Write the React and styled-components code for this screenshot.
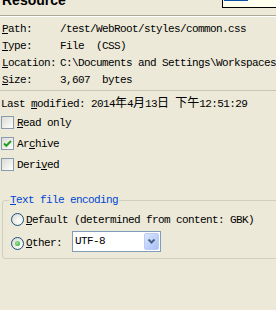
import React from 'react';
import styled, { createGlobalStyle } from 'styled-components';

const GlobalStyle = createGlobalStyle`
  html, body {
    margin: 0;
    padding: 0;
    background: #ece9d8;
  }
  body {
    width: 276px;
    height: 310px;
    overflow: hidden;
    font-family: "Liberation Mono", "Noto Sans CJK SC", monospace;
    font-size: 11px;
    letter-spacing: -0.6px;
    color: #000;
  }
`

const Page = styled.div`
  position: relative;
  width: 276px;
  height: 310px;
  overflow: hidden;
`

const Header = styled.div`
  height: 15px;
  border-bottom: 1px solid #aca899;
  box-shadow: 0 1px 0 #fff;
  overflow: hidden;
`

const Title = styled.div`
  margin: -8px 0 0 2px;
  font-family: "Liberation Sans", Arial, sans-serif;
  font-weight: bold;
  font-size: 14px;
  line-height: 16px;
  letter-spacing: 0;
`

const Hint = styled.div`
  position: absolute;
  top: -1px;
  left: 222px;
  width: 60px;
  height: 7px;
  border: 1px solid #000;
  background: #ffffee;
  overflow: hidden;
  a {
    display: block;
    margin: -10px 0 0 1px;
    width: 23px;
    color: #0a4fa8;
    text-decoration: underline;
    font-size: 11px;
    line-height: 12px;
  }
`

const Info = styled.div`
  display: grid;
  grid-template-columns: 58px 1fr;
  grid-auto-rows: 17px;
  align-items: center;
  padding: 4px 0 2px 2px;
  white-space: pre;
  border-bottom: 1px solid #c8c5b4;
`

const Key = styled.u`
  text-decoration: underline;
`

const Modified = styled.div`
  margin-top: 5px;
  padding-left: 1px;
  line-height: 16px;
  height: 16px;
  white-space: pre;
`

const Cjk = styled.span`
  font-size: 12px;
  letter-spacing: 0;
`

const CheckRow = styled.label`
  display: flex;
  align-items: center;
  height: 21px;
  gap: 3px;
  padding-left: 1px;
`

const Box = styled.span`
  width: 11px;
  height: 11px;
  border: 1px solid #8a9bb0;
  background: linear-gradient(135deg, #dcdcd6 0%, #f4f4f0 70%, #fff 100%);
  display: flex;
  align-items: center;
  justify-content: center;
`

const Group = styled.fieldset`
  margin: 17px 0 0 2px;
  width: 290px;
  padding: 0 0 6px 6px;
  border: 1px solid #d0d0bf;
  border-radius: 3px;
  legend {
    padding: 0 1px;
    line-height: 16px;
    color: #0046d5;
  }
`

const RadioRow = styled.div`
  display: flex;
  align-items: center;
  height: ${p => p.$h}px;
  margin-top: ${p => p.$top || 0}px;
  padding-left: 2px;
  white-space: pre;
`

const Radio = styled.span`
  width: 11px;
  height: 11px;
  border-radius: 50%;
  border: 1px solid #1c5180;
  background: radial-gradient(circle at 65% 65%, #fff 0%, #f0f0ea 40%, #d4d4cc 100%);
  margin: ${p => p.$shift || 0}px 2px 0 0;
  display: flex;
  align-items: center;
  justify-content: center;
  &::after {
    content: '';
    display: ${p => (p.$on ? 'block' : 'none')};
    width: 5px;
    height: 5px;
    border-radius: 50%;
    background: radial-gradient(circle at 40% 40%, #9ee89e, #21a121);
  }
`

const RadioText = styled.span`
  margin-top: ${p => p.$shift || 0}px;
`

const Combo = styled.div`
  margin-left: 10px;
  width: 84px;
  height: 19px;
  border: 1px solid #7f9db9;
  background: #fff;
  display: flex;
  align-items: center;
  padding: 0 1px 0 2px;
  justify-content: space-between;
`

const DropButton = styled.span`
  width: 15px;
  height: 17px;
  box-sizing: border-box;
  border: 1px solid #b9cbf6;
  border-radius: 2px;
  background: linear-gradient(135deg, #dbe6fd 0%, #bccffa 60%, #a9c0f6 100%);
  display: flex;
  align-items: center;
  justify-content: center;
`

function Check({ on }) {
  return (
    <Box>
      {on && (
        <svg width="9" height="9" viewBox="0 0 9 9">
          <path d="M1 4.5 L3.3 6.8 L8 2" fill="none" stroke="#21a121" strokeWidth="2" />
        </svg>
      )}
    </Box>
  );
}

export default function App() {
  return (
    <>
      <GlobalStyle />
      <Page>
        <Header>
          <Title>Resource</Title>
        </Header>
        <Hint><a>Info</a></Hint>
        <Info>
          <span><Key>P</Key>ath:</span><span>/test/WebRoot/styles/common.css</span>
          <span><Key>T</Key>ype:</span><span>{'File  (CSS)'}</span>
          <span><Key>L</Key>ocation:</span><span>{'C:\\Documents and Settings\\Workspaces'}</span>
          <span><Key>S</Key>ize:</span><span>{'3,607  bytes'}</span>
        </Info>
        <Modified>
          Last <Key>m</Key>odified: 2014<Cjk>年</Cjk>4<Cjk>月</Cjk>13<Cjk>日</Cjk> <Cjk>下午</Cjk>12:51:29
        </Modified>
        <CheckRow><Check /><span><Key>R</Key>ead only</span></CheckRow>
        <CheckRow><Check on /><span>Ar<Key>c</Key>hive</span></CheckRow>
        <CheckRow><Check /><span>Deri<Key>v</Key>ed</span></CheckRow>
        <Group>
          <legend><Key>T</Key>ext file encoding</legend>
          <RadioRow $h={21} $top={1}>
            <Radio />
            <span><Key>D</Key>{'efault (determined from content: GBK)'}</span>
          </RadioRow>
          <RadioRow $h={22}>
            <Radio $on $shift={4} />
            <RadioText $shift={3}><Key>O</Key>ther:</RadioText>
            <Combo>
              <span>UTF-8</span>
              <DropButton>
                <svg width="9" height="7" viewBox="0 0 9 7">
                  <path d="M1.5 1.5 L4.5 4.5 L7.5 1.5" fill="none" stroke="#4d6185" strokeWidth="2" />
                </svg>
              </DropButton>
            </Combo>
          </RadioRow>
        </Group>
      </Page>
    </>
  );
}
